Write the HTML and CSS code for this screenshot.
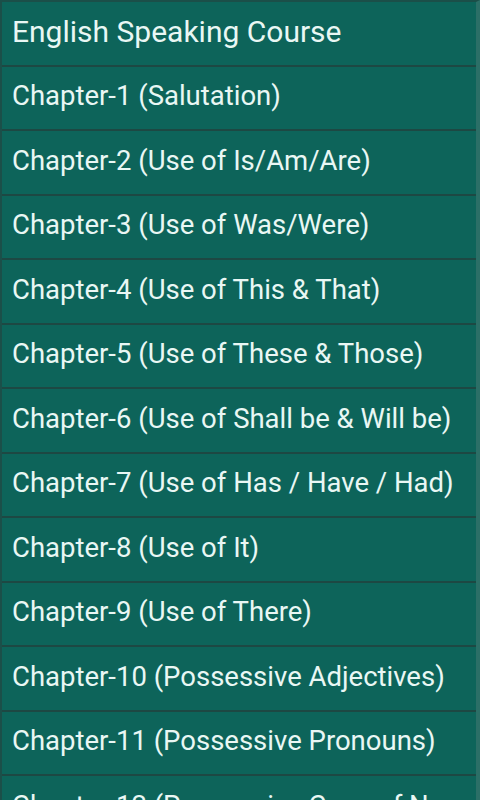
FILE: index.html
```html
<!DOCTYPE html>
<html>
<head>
<meta charset="utf-8">
<link rel="stylesheet" href="styles.css">
</head>
<body>
<div class="screen">
  <ul class="list">
    <li class="item head">English Speaking Course</li>
    <li class="item">Chapter-1 (Salutation)</li>
    <li class="item">Chapter-2 (Use of Is/Am/Are)</li>
    <li class="item">Chapter-3 (Use of Was/Were)</li>
    <li class="item">Chapter-4 (Use of This &amp; That)</li>
    <li class="item">Chapter-5 (Use of These &amp; Those)</li>
    <li class="item">Chapter-6 (Use of Shall be &amp; Will be)</li>
    <li class="item">Chapter-7 (Use of Has / Have / Had)</li>
    <li class="item">Chapter-8 (Use of It)</li>
    <li class="item">Chapter-9 (Use of There)</li>
    <li class="item">Chapter-10 (Possessive Adjectives)</li>
    <li class="item">Chapter-11 (Possessive Pronouns)</li>
    <li class="item">Chapter-12 (Possessive Case of Nouns)</li>
  </ul>
</div>
</body>
</html>
```
FILE: styles.css
```css
html, body {
  margin: 0;
  padding: 0;
  background: #0e5f56;
}
.screen {
  width: 480px;
  height: 800px;
  overflow: hidden;
  box-sizing: border-box;
  border-left: 2px solid #1b4f49;
  border-right: 4px solid #2b6f67;
  border-top: 2px solid #1b4f49;
  background: #0d645a;
}
.list {
  list-style: none;
  margin: 0;
  padding: 0;
}
.item {
  height: 62.5px;
  box-sizing: border-box;
  height: 64.5px;
  padding-bottom: 4px;
  border-bottom: 2px solid #1d4843;
  display: flex;
  align-items: center;
  padding-left: 10px;
  font-family: Roboto, "Noto Sans", sans-serif;
  font-size: 27.5px;
  color: #e9f7f4;
  white-space: nowrap;
  overflow: hidden;
}
.head {
  font-size: 30px;
}
```
